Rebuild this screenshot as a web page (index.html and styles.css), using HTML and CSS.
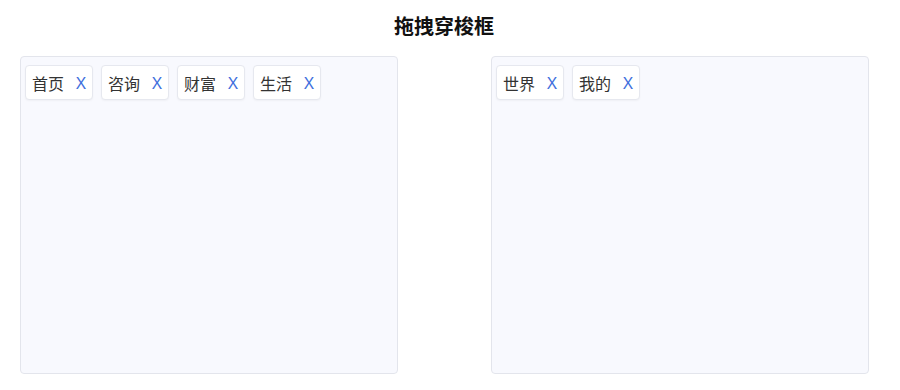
FILE: index.html
```html
<!DOCTYPE html>
<html>
<head lang="zh">
    <meta charset="UTF-8">
    <title>拖拽穿梭框</title>
    <link rel="stylesheet" href="styles.css">
</head>
<body>
<h2 class="title">拖拽穿梭框</h2>
<div class="transfer">
    <div class="box" id="left">
        <div class="tag"><span>首页</span><i>X</i></div>
        <div class="tag"><span>咨询</span><i>X</i></div>
        <div class="tag"><span>财富</span><i>X</i></div>
        <div class="tag"><span>生活</span><i>X</i></div>
    </div>
    <div class="box" id="right">
        <div class="tag"><span>世界</span><i>X</i></div>
        <div class="tag"><span>我的</span><i>X</i></div>
    </div>
</div>
</body>
</html>
```

FILE: styles.css
```css
*{
    margin:0;
    padding:0;
    box-sizing: border-box;
}
body{
    font-family: "Noto Sans CJK SC", "Liberation Sans", sans-serif;
    color: #333;
    background: #fff;
}
.title{
    height: 52px;
    line-height: 52px;
    text-align: center;
    font-size: 20px;
    font-weight: bold;
    color: #111;
    padding-right: 12px;
}
.transfer{
    display: flex;
    gap: 93px;
    padding: 4px 20px 0;
}
.box{
    width: 378px;
    height: 318px;
    background: #f8f9fe;
    border: 1px solid #e3e5ec;
    border-radius: 4px;
    padding: 8px 4px;
    display: flex;
    align-items: flex-start;
    align-content: flex-start;
    flex-wrap: wrap;
    gap: 8px;
}
.tag{
    width: 68px;
    height: 35px;
    display: flex;
    align-items: center;
    padding: 0 6px;
    background: #fff;
    border: 1px solid #e6e8ef;
    border-radius: 4px;
    box-shadow: 0 1px 2px rgba(0,0,0,0.04);
    font-size: 16px;
    cursor: move;
}
.tag span{
    width: 32px;
    line-height: 22px;
}
.tag i{
    font-style: normal;
    font-size: 17px;
    color: #3f6fdd;
    margin-left: 12px;
    font-family: "Noto Sans", "Liberation Sans", sans-serif;
    line-height: 22px;
}
```
